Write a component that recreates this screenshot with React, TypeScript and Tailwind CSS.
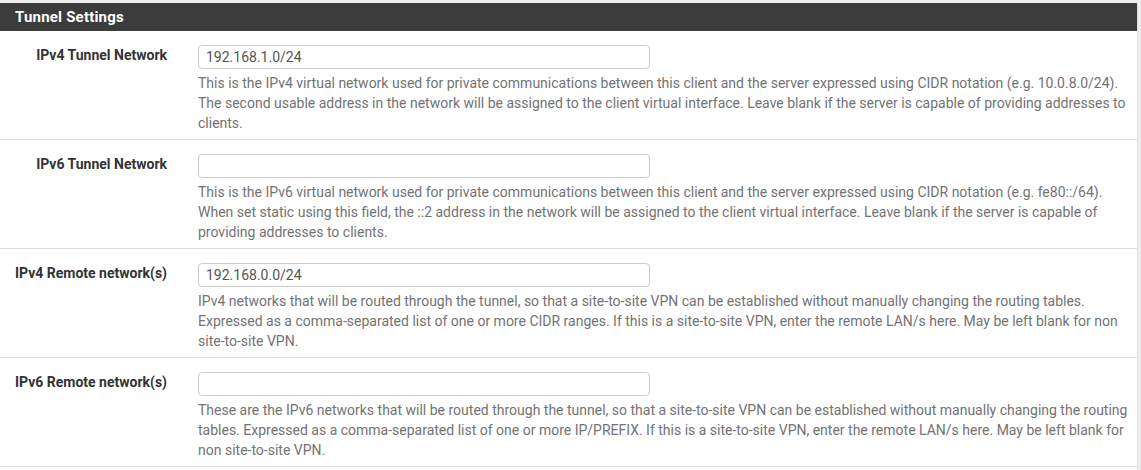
import React from "react";

const rows = [
  {
    label: "IPv4 Tunnel Network",
    value: "192.168.1.0/24",
    help: "This is the IPv4 virtual network used for private communications between this client and the server expressed using CIDR notation (e.g. 10.0.8.0/24). The second usable address in the network will be assigned to the client virtual interface. Leave blank if the server is capable of providing addresses to clients.",
  },
  {
    label: "IPv6 Tunnel Network",
    value: "",
    help: "This is the IPv6 virtual network used for private communications between this client and the server expressed using CIDR notation (e.g. fe80::/64). When set static using this field, the ::2 address in the network will be assigned to the client virtual interface. Leave blank if the server is capable of providing addresses to clients.",
  },
  {
    label: "IPv4 Remote network(s)",
    value: "192.168.0.0/24",
    help: "IPv4 networks that will be routed through the tunnel, so that a site-to-site VPN can be established without manually changing the routing tables. Expressed as a comma-separated list of one or more CIDR ranges. If this is a site-to-site VPN, enter the remote LAN/s here. May be left blank for non site-to-site VPN.",
  },
  {
    label: "IPv6 Remote network(s)",
    value: "",
    help: "These are the IPv6 networks that will be routed through the tunnel, so that a site-to-site VPN can be established without manually changing the routing tables. Expressed as a comma-separated list of one or more IP/PREFIX. If this is a site-to-site VPN, enter the remote LAN/s here. May be left blank for non site-to-site VPN.",
  },
];

export default function App() {
  return (
    <div
      className="w-[1141px] h-[470px] bg-[#eeeeee] pt-[3px] overflow-hidden"
      style={{ fontFamily: "Roboto, 'Liberation Sans', sans-serif" }}
    >
      <div className="w-[1138px] h-[480px] bg-white border-r border-[#dddddd]">
        <div className="h-[28px] bg-[#3c3c3c] flex items-center pl-[15px]">
          <span className="text-white font-bold text-[15px] tracking-[0.2px]">Tunnel Settings</span>
        </div>
        {rows.map((r) => (
          <div key={r.label} className="flex border-b border-[#dddddd] pt-[14px] pb-[6px]">
            <div className="w-[183px] pr-[16px] text-right text-[14px] font-bold text-[#333333] leading-[20px] shrink-0">
              {r.label}
            </div>
            <div className="w-[951px] pl-[15px]">
              <input
                readOnly
                value={r.value}
                className="block w-[452px] h-[24px] border border-[#cccccc] rounded-[4px] px-[7px] text-[14px] text-[#555555] outline-none"
              />
              <div className="mt-[4px] text-[14px] leading-[20px] text-[#737373]">{r.help}</div>
            </div>
          </div>
        ))}
      </div>
    </div>
  );
}
